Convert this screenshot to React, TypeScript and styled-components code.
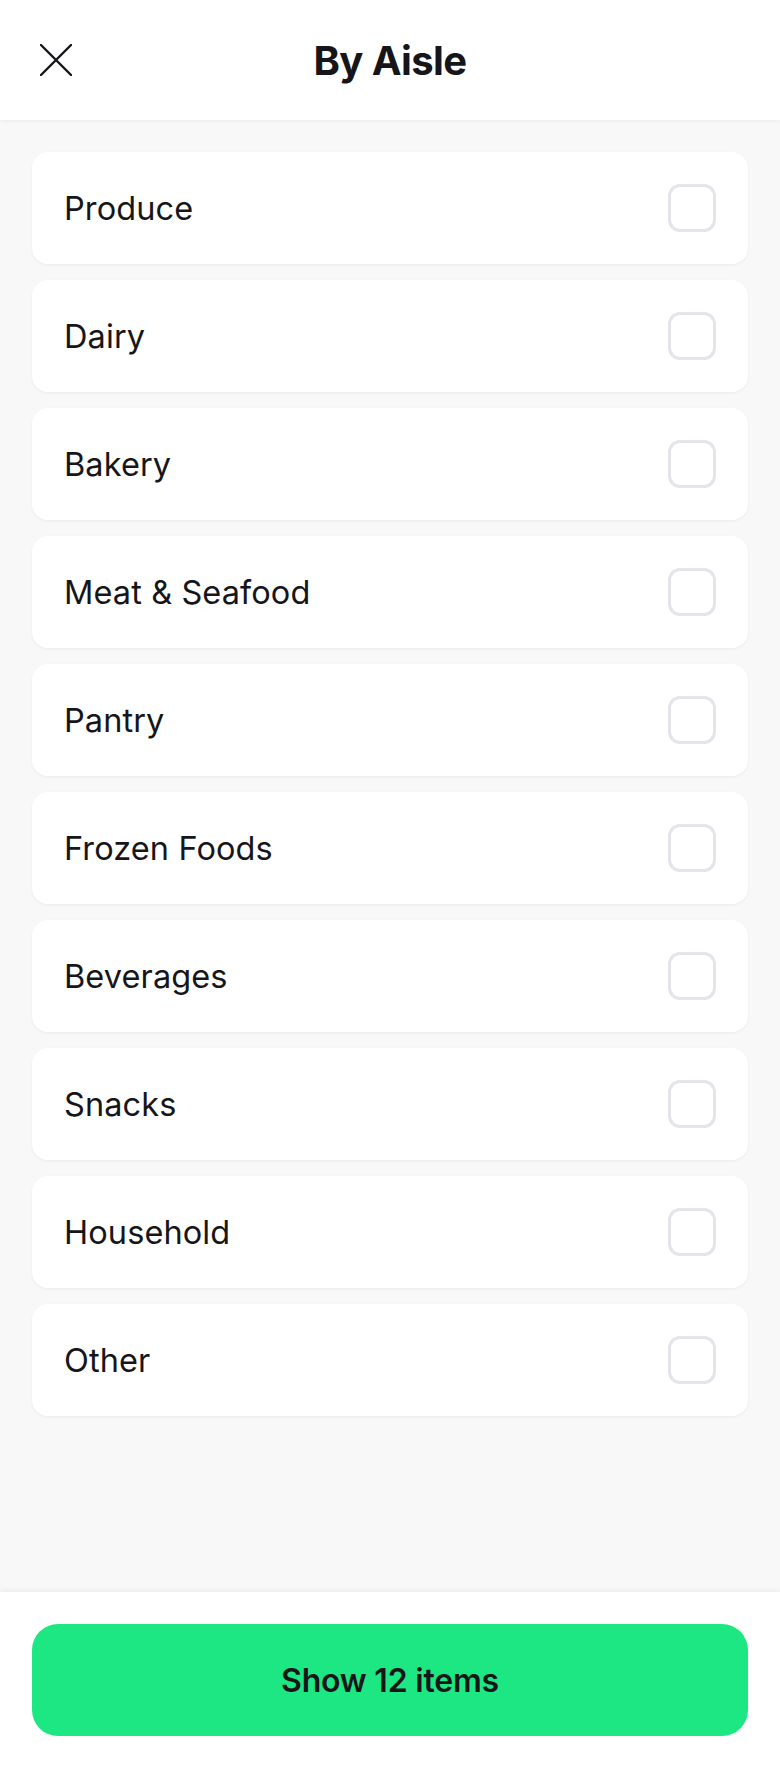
import React from "react";
import styled, { createGlobalStyle } from "styled-components";

const GlobalStyle = createGlobalStyle`
  html, body { margin: 0; padding: 0; }
  body {
    font-family: Inter, "Noto Sans", "Liberation Sans", sans-serif;
    background: #f8f8f8;
    color: #16161a;
  }
  * { box-sizing: border-box; }
`;

const Screen = styled.div`
  display: flex;
  flex-direction: column;
  width: 780px;
  height: 1768px;
  background: #f8f8f8;
`;

const Header = styled.header`
  position: relative;
  z-index: 1;
  display: flex;
  align-items: center;
  justify-content: center;
  height: 120px;
  flex: none;
  background: #ffffff;
  box-shadow: 0 1px 4px rgba(0, 0, 0, 0.06);
`;

const CloseButton = styled.button`
  position: absolute;
  left: 34px;
  top: 38px;
  width: 44px;
  height: 44px;
  border: 0;
  padding: 0;
  background: transparent;
  display: flex;
  align-items: center;
  justify-content: center;
  color: #16161a;
`;

const Title = styled.h1`
  margin: 0;
  font-size: 40px;
  font-weight: 700;
  letter-spacing: -0.6px;
  color: #16161a;
`;

const List = styled.main`
  flex: 1;
  display: flex;
  flex-direction: column;
  gap: 16px;
  padding: 32px 32px 0;
`;

const Row = styled.label`
  display: flex;
  align-items: center;
  justify-content: space-between;
  height: 112px;
  padding: 0 32px;
  background: #ffffff;
  border-radius: 16px;
  box-shadow: 0 1px 3px rgba(0, 0, 0, 0.06);
`;

const RowLabel = styled.span`
  font-size: 32.5px;
  font-weight: 400;
  letter-spacing: 0.1px;
  color: #16161a;
`;

const Box = styled.span<{ $checked?: boolean }>`
  width: 48px;
  height: 48px;
  border-radius: 12px;
  border: 3px solid ${(p) => (p.$checked ? "#1ce783" : "#e4e4ea")};
  background: ${(p) => (p.$checked ? "#1ce783" : "#ffffff")};
  flex: none;
`;

const Footer = styled.footer`
  flex: none;
  height: 176px;
  padding: 32px;
  background: #ffffff;
  box-shadow: 0 -2px 6px rgba(0, 0, 0, 0.05);
`;

const ShowButton = styled.button`
  width: 100%;
  height: 112px;
  border: 0;
  border-radius: 26px;
  background: #1ce783;
  color: #16161a;
  font-family: inherit;
  font-size: 32px;
  font-weight: 600;
  letter-spacing: -0.2px;
`;

const aisles = [
  "Produce",
  "Dairy",
  "Bakery",
  "Meat & Seafood",
  "Pantry",
  "Frozen Foods",
  "Beverages",
  "Snacks",
  "Household",
  "Other",
];

export default function App() {
  return (
    <>
      <GlobalStyle />
      <Screen>
        <Header>
          <CloseButton aria-label="Close">
            <svg width="32" height="32" viewBox="0 0 32 32" fill="none">
              <path
                d="M1 1 L31 31 M31 1 L1 31"
                stroke="currentColor"
                strokeWidth="2.4"
                strokeLinecap="round"
              />
            </svg>
          </CloseButton>
          <Title>By Aisle</Title>
        </Header>
        <List>
          {aisles.map((a) => (
            <Row key={a}>
              <RowLabel>{a}</RowLabel>
              <Box />
            </Row>
          ))}
        </List>
        <Footer>
          <ShowButton>Show 12 items</ShowButton>
        </Footer>
      </Screen>
    </>
  );
}
